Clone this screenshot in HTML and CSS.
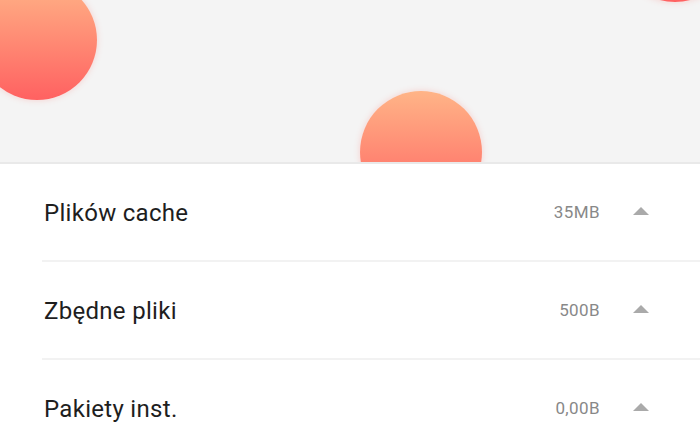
FILE: index.html
```html
<!DOCTYPE html>
<html lang="pl">
<head>
    <meta charset="UTF-8">
    <meta name="viewport" content="width=device-width, initial-scale=1.0">
    <title>Czyszczenie</title>
    <link rel="stylesheet" href="styles.css">
</head>
<body>

    <div class="header">
        <div class="bubble bubble-left"></div>
        <div class="bubble bubble-middle"></div>
        <div class="bubble bubble-right"></div>
    </div>

    <div class="list">
        <div class="row">
            <span class="label">Plików cache</span>
            <span class="size">35MB</span>
            <span class="arrow"></span>
        </div>
        <div class="row">
            <span class="label">Zbędne pliki</span>
            <span class="size">500B</span>
            <span class="arrow"></span>
        </div>
        <div class="row">
            <span class="label">Pakiety inst.</span>
            <span class="size">0,00B</span>
            <span class="arrow"></span>
        </div>
    </div>

</body>
</html>
```

FILE: styles.css
```css
body {
    margin: 0;
    font-family: Roboto, "Liberation Sans", sans-serif;
    background-color: white;
    overflow: hidden;
}
.header {
    position: relative;
    height: 162px;
    background-color: #f4f4f4;
    border-bottom: 2px solid #e9e9e9;
    overflow: hidden;
}
.bubble {
    position: absolute;
    border-radius: 50%;
    background: linear-gradient(to bottom, #ffb487, #ff6161);
    box-shadow: 0 0 6px rgba(255, 100, 90, 0.25);
}
.bubble-left {
    left: -23px;
    top: -20px;
    width: 120px;
    height: 120px;
}
.bubble-middle {
    left: 360px;
    top: 91px;
    width: 122px;
    height: 122px;
}
.bubble-right {
    left: 615px;
    top: -118px;
    width: 120px;
    height: 120px;
}
.row {
    display: flex;
    align-items: center;
    height: 96px;
    margin-left: 42px;
    padding-left: 2px;
    padding-right: 51px;
    border-bottom: 2px solid #f2f2f2;
}
.label {
    flex: 1;
    font-size: 24px;
    letter-spacing: 0.3px;
    color: #1e1e1e;
    padding-top: 2px;
}
.size {
    font-size: 17px;
    letter-spacing: 0.4px;
    color: #888;
}
.arrow {
    width: 0;
    height: 0;
    margin-left: 33px;
    border-left: 8px solid transparent;
    border-right: 8px solid transparent;
    border-bottom: 8px solid #aaa;
    margin-bottom: 3px;
}
```
